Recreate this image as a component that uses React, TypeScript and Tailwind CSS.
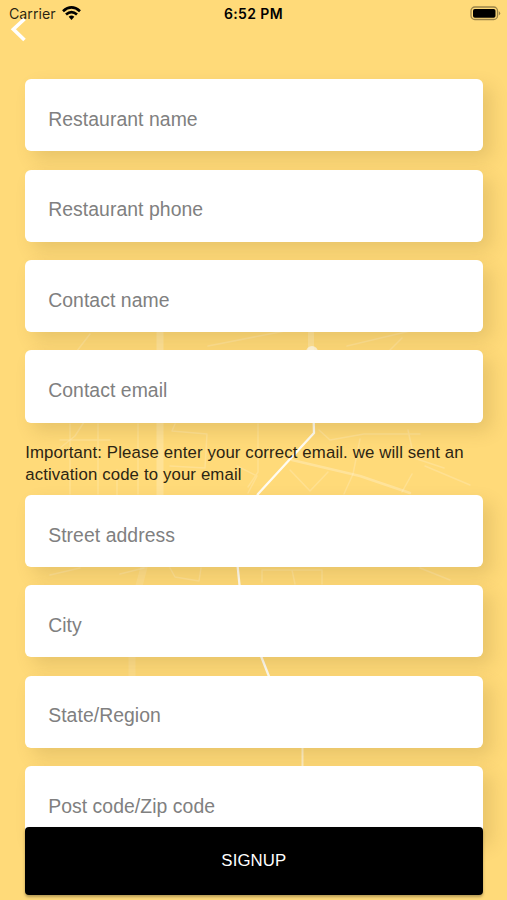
const contactFields = ["Restaurant name", "Restaurant phone", "Contact name", "Contact email"];
const addressFields = ["Street address", "City", "State/Region", "Post code/Zip code"];

function Field({ label }: { label: string }) {
  return (
    <div className="flex h-[72.2px] w-full shrink-0 items-center rounded-[6px] bg-white pt-[7.6px] pl-[23px] text-[19.4px] leading-6 tracking-[0.05px] text-[#808080] shadow-[8px_8px_18px_rgba(105,80,25,0.16)]">
      {label}
    </div>
  );
}

function MapBackdrop() {
  return (
    <svg className="absolute inset-0 h-full w-full" viewBox="0 0 507 900" fill="none" stroke="white" strokeLinecap="round" strokeLinejoin="round">
      <g strokeOpacity="0.18" strokeWidth="1.5">
        <path d="M90 334 70 360M208 346 290 330M347 346 410 331M388 352 402 338M84 422 75 436 60 448" />
        <path d="M70 424v70M98 424v70M138 424v70M175 424 172 431 207 434 205 468 170 466M117 470v25M237 466l20 10-9 17M258 424v48l-10 15M60 440h50" />
        <path d="M319 430l11 10 34-6h56M360 439l-7 35-9 20M328 472 310 491 290 470M412 474l-10 18M408 430l6 28 30 10M425 466 470 485" />
        <path d="M170 568l5 9 24 4 2-13M262 582v-12h60v14M292 570l3 14M120 574l24-6M420 568l30 12M50 575l30-7" />
      </g>
      <g>
        <path d="M160 333v162" strokeWidth="7" strokeOpacity="0.22" />
        <path d="M144 567 139 586 132 657v20" strokeWidth="7" strokeOpacity="0.13" />
        <path d="M311 333v17" strokeWidth="6" strokeOpacity="0.22" />
        <path d="M292 460 360 476 410 493" strokeWidth="2.5" strokeOpacity="0.25" />
      </g>
      <circle cx="312" cy="352" r="6" fill="white" fillOpacity="0.65" stroke="none" />
      <path d="M312 352 314 433 258 494M258 494 236 550 240 590 261 656 270 679" strokeWidth="2.3" strokeOpacity="0.9" />
      <path d="M302.5 744v25" strokeWidth="2" strokeOpacity="0.55" />
    </svg>
  );
}

function StatusBar() {
  return (
    <div className="grid h-[27px] grid-cols-3 items-center px-[7px] font-['Inter',sans-serif] text-[14px] text-black">
      <div className="flex items-center gap-[6px] pl-[2px]">
        <span className="text-[14.2px] text-black/85">Carrier</span>
        <svg className="h-[15px] w-[19px]" viewBox="0 0 19 15" fill="none" stroke="black" strokeWidth="2.7">
          <path d="M1 5.2Q9.5-2.3 18 5.2" />
          <path d="M4 8.6Q9.5 3.7 15 8.6" />
          <path d="M6.7 10.8Q9.5 8.4 12.3 10.8L9.5 14Z" fill="black" stroke="none" />
        </svg>
      </div>
      <span className="text-center font-semibold tracking-[0.4px]">6:52 PM</span>
      <svg className="-mr-px h-[15px] w-[31px] justify-self-end" viewBox="0 0 31 15">
        <rect x="1" y="1" width="26.5" height="12.5" rx="3.8" fill="none" stroke="black" strokeOpacity="0.4" strokeWidth="1.3" />
        <rect x="3" y="3" width="22.5" height="8.7" rx="1.8" fill="black" />
        <path d="M28.8 5q2.8 2.3 0 4.6z" fill="black" fillOpacity="0.4" />
      </svg>
    </div>
  );
}

export default function App() {
  return (
    <div className="relative isolate h-[900px] w-full overflow-hidden bg-[#ffda79] font-['Liberation_Sans',Arial,sans-serif]">
      <MapBackdrop />
      <div className="relative flex h-full flex-col">
        <StatusBar />
        <button type="button" aria-label="Back" className="absolute top-[16px] left-[10px]">
          <svg className="h-[26px] w-[18px]" viewBox="0 0 18 26" fill="none" stroke="white" strokeWidth="3.6">
            <path d="M14.5 3 3.4 13.2 14.5 24" />
          </svg>
        </button>
        <main className="flex flex-col pt-[52.2px] pr-[24.5px] pl-[25.2px]">
          <div className="flex flex-col gap-[18.2px]">
            {contactFields.map((label) => <Field key={label} label={label} />)}
          </div>
          <p className="pt-[19.5px] pb-[8.2px] text-[16.8px] leading-[22.3px] tracking-[0.13px] text-[#2c2513]">
            Important: Please enter your correct email. we will sent an<br />activation code to your email
          </p>
          <div className="flex flex-col gap-[18.2px]">
            {addressFields.map((label) => <Field key={label} label={label} />)}
          </div>
        </main>
        <button type="button" className="absolute right-[24.5px] bottom-[5px] left-[25.2px] h-[68.5px] rounded-[4px] bg-black text-[16.8px] tracking-[0.1px] text-white shadow-[0_2px_3px_rgba(0,0,0,0.3)]">
          SIGNUP
        </button>
      </div>
    </div>
  );
}
